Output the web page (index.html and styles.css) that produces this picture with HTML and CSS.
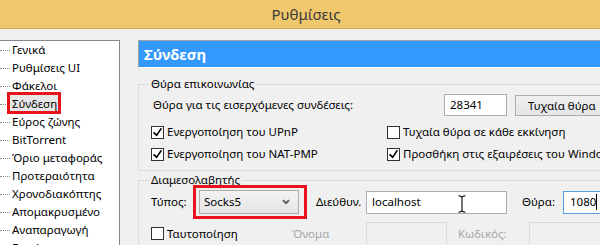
FILE: index.html
```html
<!DOCTYPE html>
<html lang="el">
<head>
    <meta charset="UTF-8">
    <title>Ρυθμίσεις</title>
    <link rel="stylesheet" href="styles.css">
</head>
<body>
    <div class="titlebar">Ρυθμίσεις</div>

    <div class="main">
        <ul class="tree">
            <li><span>Γενικά</span></li>
            <li><span>Ρυθμίσεις UI</span></li>
            <li><span>Φάκελοι</span></li>
            <li><span class="sel">Σύνδεση</span></li>
            <li><span>Εύρος ζώνης</span></li>
            <li><span>BitTorrent</span></li>
            <li><span>Όριο μεταφοράς</span></li>
            <li><span>Προτεραιότητα</span></li>
            <li><span>Χρονοδιακόπτης</span></li>
            <li><span>Απομακρυσμένο</span></li>
            <li><span>Αναπαραγωγή</span></li>
            <li><span>Ετικέτες</span></li>
        </ul>

        <div class="panel">
            <div class="panel-head">Σύνδεση</div>

            <fieldset class="group first">
                <legend>Θύρα επικοινωνίας</legend>
                <div class="port-row">
                    <span class="port-label">Θύρα για τις εισερχόμενες συνδέσεις:</span>
                    <div class="field port">28341</div>
                    <button type="button" class="btn">Τυχαία θύρα</button>
                </div>
                <div class="checks">
                    <label class="check"><input type="checkbox" checked>Ενεργοποίηση του UPnP</label>
                    <label class="check"><input type="checkbox">Τυχαία θύρα σε κάθε εκκίνηση</label>
                    <label class="check"><input type="checkbox" checked>Ενεργοποίηση του NAT-PMP</label>
                    <label class="check"><input type="checkbox" checked>Προσθήκη στις εξαιρέσεις του Windows Firewall</label>
                </div>
            </fieldset>

            <fieldset class="group second">
                <legend>Διαμεσολαβητής</legend>
                <div class="proxy-row top">
                    <span class="lbl type-lbl">Τύπος:</span>
                    <span class="marked">
                        <span class="select">Socks5
                            <svg width="8" height="6" viewBox="0 0 8 6"><path d="M1 1.2 L4 4.2 L7 1.2" fill="none" stroke="#555" stroke-width="1.8"/></svg>
                        </span>
                    </span>
                    <span class="lbl addr-lbl">Διεύθυν.</span>
                    <div class="field addr">localhost
                        <svg class="ibeam" width="8" height="18" viewBox="0 0 8 18"><path d="M0.5 0.8 Q4 0.8 4 3 Q4 0.8 7.5 0.8 M4 3 V15 M0.5 17.2 Q4 17.2 4 15 Q4 17.2 7.5 17.2" fill="none" stroke="#000" stroke-width="1.1"/></svg>
                    </div>
                    <span class="lbl pport-lbl">Θύρα:</span>
                    <div class="field pport focus">1080<span class="caret"></span></div>
                </div>
                <div class="proxy-row bottom">
                    <label class="check auth"><input type="checkbox">Ταυτοποίηση</label>
                    <span class="lbl dis user-lbl">Όνομα</span>
                    <div class="field off user"></div>
                    <span class="lbl dis pass-lbl">Κωδικός:</span>
                    <div class="field off pass"></div>
                </div>
            </fieldset>
        </div>
    </div>
</body>
</html>
```

FILE: styles.css
```css
html, body {
    margin: 0;
    overflow: hidden;
}

body {
    font-family: "Noto Sans", sans-serif;
    font-size: 11.5px;
    line-height: 16px;
    color: #000;
    background-color: #f0f0f0;
    width: 600px;
    height: 245px;
}

.titlebar {
    height: 28px;
    line-height: 28px;
    background-color: #f0c86b;
    border-bottom: 1px solid #d4a94f;
    text-align: center;
    padding-left: 12px;
    font-size: 15px;
    color: #3a3a3a;
}

.main {
    display: flex;
    gap: 18px;
    padding-top: 11px;
    height: 205px;
}

/* lewe drzewko */
.tree {
    list-style: none;
    margin: 0;
    padding: 0;
    width: 119px;
    flex-shrink: 0;
    background-color: white;
    border-top: 1px solid #828790;
    border-right: 1px solid #828790;
}

.tree li {
    display: flex;
    align-items: center;
    height: 18px;
    white-space: nowrap;
}

.tree li::before {
    content: "";
    width: 10px;
    border-top: 1px dotted #8a8a8a;
}

.tree li span {
    padding: 0 2px;
    line-height: 18px;
}

.tree .sel {
    position: relative;
    background-color: #e6e6e6;
}

.tree .sel::after {
    content: "";
    position: absolute;
    inset: -3px -2px -1px -3px;
    border: 3px solid #e8141b;
}

/* prawy panel */
.panel {
    width: 480px;
    flex-shrink: 0;
}

.panel-head {
    height: 26px;
    line-height: 26px;
    background-color: #3399ff;
    border-top: 1px solid #a0a0a0;
    border-left: 1px solid #a0a0a0;
    border-bottom: 1px solid #ffffff;
    padding-left: 5px;
    color: white;
    font-weight: bold;
    font-size: 15px;
}

.group {
    margin: 0;
    border: 1px solid #dcdcdc;
    padding: 2px 0 5px 12px;
    min-width: 0;
}

.group legend {
    padding: 0 2px;
    margin-left: -2px;
    line-height: 16px;
}

.group.first {
    margin-top: 8px;
}

.group.second {
    margin-top: 1px;
}

.port-row {
    display: flex;
    align-items: center;
    height: 22px;
}

.port-label {
    width: 291px;
    margin-left: 2px;
    white-space: nowrap;
}

.field {
    box-sizing: border-box;
    border: 1px solid #abadb3;
    background-color: white;
    padding-left: 5px;
    display: flex;
    align-items: center;
    white-space: nowrap;
    flex-shrink: 0;
}

.field.port {
    width: 63px;
    height: 22px;
}

.btn {
    box-sizing: border-box;
    margin-left: 8px;
    width: 100px;
    height: 21px;
    border: 1px solid #acacac;
    background: linear-gradient(#f0f0f0, #e5e5e5);
    font-family: inherit;
    font-size: 11.5px;
    text-align: left;
    padding: 0 0 0 12px;
    color: #000;
}

.checks {
    display: grid;
    grid-template-columns: 236px auto;
    grid-auto-rows: 22px;
    margin-top: 5px;
}

.check {
    display: flex;
    align-items: center;
    white-space: nowrap;
}

.check input {
    appearance: none;
    -webkit-appearance: none;
    box-sizing: border-box;
    width: 13px;
    height: 13px;
    margin: 0 3px 0 0;
    border: 1px solid #333;
    background-color: white;
    display: inline-grid;
    place-content: center;
}

.check input:checked::before {
    content: "";
    width: 9px;
    height: 9px;
    background-color: #000;
    clip-path: polygon(12% 46%, 0 62%, 42% 100%, 100% 14%, 86% 2%, 40% 72%);
}

/* proxy */
.proxy-row {
    display: flex;
    align-items: center;
    white-space: nowrap;
}

.proxy-row.top {
    height: 24px;
}

.proxy-row.bottom {
    height: 23px;
    margin-top: 8px;
    align-items: flex-start;
}

.proxy-row.bottom .check,
.proxy-row.bottom .lbl {
    height: 23px;
    display: flex;
    align-items: center;
}

.lbl {
    flex-shrink: 0;
}

.type-lbl { width: 48px; }
.addr-lbl { width: 50px; margin-left: 17px; }
.pport-lbl { width: 41px; margin-left: 15px; }

.marked {
    position: relative;
    flex-shrink: 0;
}

.marked::after {
    content: "";
    position: absolute;
    inset: -5px -8px -5px -6px;
    border: 3px solid #e8141b;
}

.select {
    box-sizing: border-box;
    width: 100px;
    height: 24px;
    border: 1px solid #acacac;
    background: linear-gradient(#f2f2f2, #e5e5e5);
    display: flex;
    align-items: center;
    justify-content: space-between;
    padding: 0 8px 0 4px;
}

.field.addr {
    position: relative;
    width: 141px;
    height: 23px;
}

.ibeam {
    position: absolute;
    left: 91px;
    top: 3px;
}

.field.pport {
    width: 60px;
    height: 23px;
    padding-left: 6px;
}

.field.focus {
    border-color: #5a9fe3;
}

.caret {
    width: 1px;
    height: 16px;
    background-color: #000;
}

.auth { width: 141px; }

.dis { color: #a6a6a6; }
.user-lbl { width: 74px; }
.pass-lbl { width: 71px; margin-left: 11px; }

.field.off {
    background-color: #f0f0f0;
    border-color: #d9d9d9;
    height: 26px;
}

.field.user { width: 81px; }
.field.pass { width: 80px; }
```
